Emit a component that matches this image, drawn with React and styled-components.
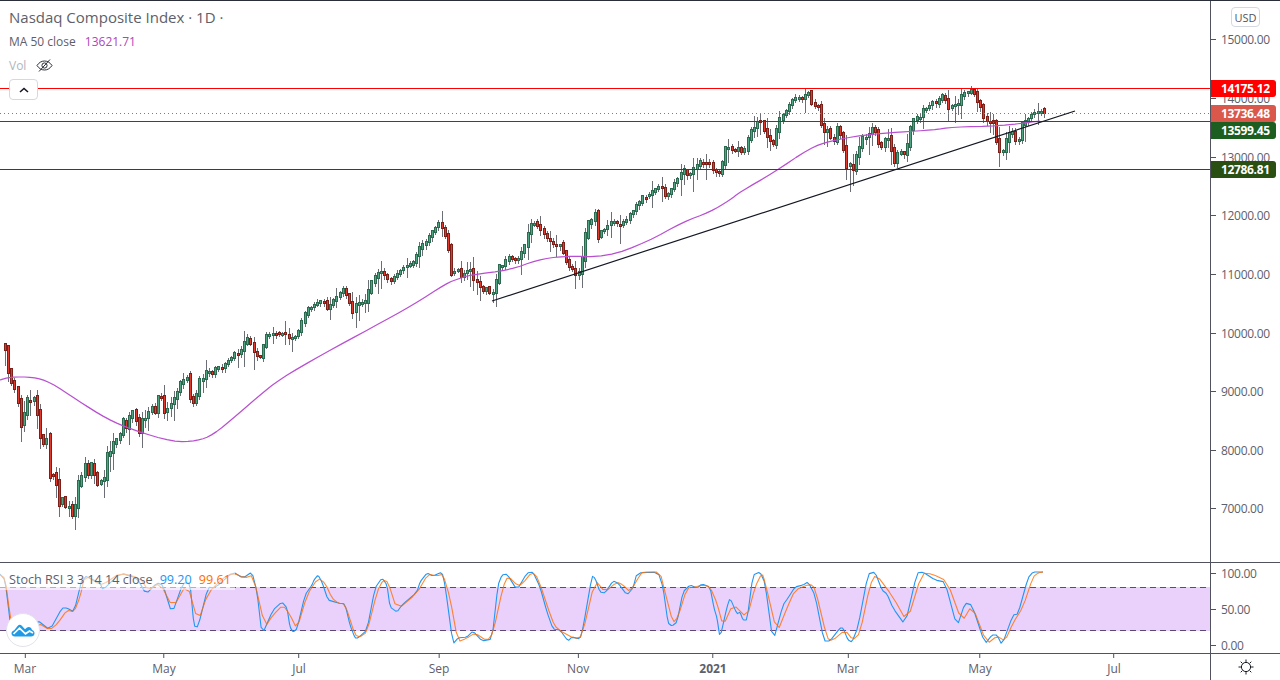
import React from "react";
import styled, { createGlobalStyle } from "styled-components";

const pairs = (s) =>
  s
    .trim()
    .split(/\s+/)
    .map((p) => p.split(",").map(Number));

const closes = pairs(`
2,344 6,353 9,379 12,383 16,392 19,412 22,433 26,395 29,408 32,392 35,405 38,420 42,453 45,430 48,452 51,497 54,458
58,513 61,488 64,513 67,500 71,515 74,517 77,485 80,485 84,462 87,478 90,464 93,467 96,487 100,480 103,485 106,456
109,456 113,444 116,440 119,438 122,420 126,428 129,419 132,411 135,417 138,435 142,420 145,419 148,413 151,407
155,413 158,397 161,397 164,413 168,408 171,403 174,399 177,392 180,384 184,380 187,378 190,399 193,403 197,393
200,378 203,379 206,372 209,372 213,375 216,367 219,368 222,368 226,363 229,360 232,357 235,353 239,355 242,347
245,342 248,338 255,356 258,357 262,357 264,337 273,333 284,333 290,340 297,335 303,318 307,309 313,306 323,300
326,310 339,294 342,288 348,299 352,313 355,305 365,302 372,281 380,271 390,282 394,277 403,268 413,263 419,249
427,240 439,222 445,237 449,253 452,282 455,268 458,270 461,278 465,272 472,270 474,283 478,282 482,293 487,287
491,297 495,286 498,268 503,266 507,257 513,260 517,261 520,255 526,243 529,227 533,222 537,226 542,232 546,238
552,244 560,244 562,251 568,267 571,267 575,275 578,275 581,265 584,243 587,224 591,222 595,213 597,239 600,232
604,230 607,226 610,222 613,221 617,224 620,225 623,223 626,221 629,215 633,211 636,205 639,203 643,196 646,197
653,191 660,185 665,197 668,194 675,182 678,178 682,172 684,170 688,177 694,168 700,162 704,163 707,163 711,163
713,173 717,172 720,174 723,159 726,146 733,151 737,150 739,148 742,154 746,147 749,133 755,127 759,118 765,135
768,137 772,147 775,138 778,123 781,117 784,114 788,107 792,101 794,99 797,96 801,100 804,96 808,92 810,102
814,107 817,104 820,120 823,135 826,127 830,137 833,144 837,128 839,130 843,148 846,167 849,163 852,173 856,157
859,148 862,138 865,138 868,135 872,128 875,132 878,143 881,148 886,137 889,140 892,155 894,163 898,153 901,152
904,155 907,146 910,130 914,118 920,117 923,110 928,107 933,102 936,104 941,97 943,95 946,102 949,110 953,103
957,108 959,100 963,93 966,92 969,94 972,87 976,101 979,103 983,117 986,120 989,124 992,114 994,133 998,148
1001,155 1004,148 1007,137 1010,132 1014,133 1017,152 1020,127 1024,123 1027,120 1030,115 1033,114 1036,112
1041,111 1044,108
`);

const maLine = pairs(`
0,380 10,377 33,377 50,382 77,400 107,419 133,430 173,442 197,441 213,435 237,415 260,395 280,379 323,354 373,327
413,305 447,283 458,279 470,275 510,270 537,260 563,256 607,257 647,242 683,222 710,212 730,200 740,192 773,173
810,148 830,141 863,135 900,132 933,130 953,127 1000,126 1040,121
`);

const stochK = pairs(`
0,574 5,580 9,612 12,640 20,645 30,632 37,620 50,630 62,608 67,608 74,612 83,575 100,583 103,590 120,573 137,578
146,594 157,583 163,585 172,614 183,583 190,583 194,626 198,627 208,587 215,588 233,572 243,578 252,572 257,592
262,635 273,610 282,602 287,608 290,627 293,632 297,629 305,595 312,585 314,580 318,575 322,582 328,600 335,602
338,603 345,604 350,625 355,638 358,638 367,630 375,588 382,578 387,585 390,607 397,612 402,605 417,592 420,582
427,573 433,576 442,572 445,585 453,644 458,638 467,637 473,631 482,641 492,639 498,585 502,575 507,574 517,590
527,573 533,572 540,587 547,612 553,629 560,630 568,641 572,637 580,639 583,628 592,576 595,578 600,592 605,593
613,581 618,583 627,595 633,588 637,573 658,572 663,587 668,623 672,626 677,622 683,592 690,585 697,588 702,584
710,587 714,608 717,618 720,638 727,607 730,598 737,614 740,612 743,620 747,620 753,575 760,572 765,583 773,642
783,605 788,598 795,587 803,585 808,582 815,595 824,641 830,641 840,628 843,628 848,640 852,642 858,627 868,574
875,572 882,590 887,594 893,608 905,625 917,573 923,572 935,580 945,582 957,627 965,603 972,605 985,644 992,635
997,635 1002,645 1013,615 1018,614 1028,578 1033,572 1043,572
`);

const stochD = pairs(`
0,575 5,578 10,615 13,628 22,642 30,636 38,623 50,630 58,623 67,610 74,612 80,597 85,575 100,585 107,582 120,573
140,578 148,590 160,583 173,608 187,583 198,622 208,593 223,578 233,573 245,578 253,575 265,627 273,615 283,605
290,615 297,629 307,595 318,578 325,583 332,598 338,603 345,604 355,635 360,637 367,632 377,592 383,580 388,582
397,610 417,593 428,574 437,576 443,574 450,598 458,642 467,638 475,633 487,641 493,633 503,587 508,576 518,586
523,583 532,572 538,578 552,620 557,629 575,639 582,636 595,580 605,592 617,582 623,585 630,592 640,575 643,572
660,572 665,592 673,623 678,617 687,588 695,587 703,585 710,587 717,603 723,626 733,604 747,618 755,587 762,573
765,582 777,633 787,608 795,590 810,584 815,588 827,638 832,641 845,630 853,640 860,633 870,585 876,574 893,597
907,622 922,573 932,574 947,581 962,622 972,605 987,644 997,636 1005,641 1013,623 1023,607 1033,577 1038,573
1043,572
`);

const interp = (points, x) => {
  if (x <= points[0][0]) return points[0][1];
  for (let i = 1; i < points.length; i++) {
    if (x <= points[i][0]) {
      const [x0, y0] = points[i - 1];
      const [x1, y1] = points[i];
      return y0 + ((y1 - y0) * (x - x0)) / (x1 - x0);
    }
  }
  return points[points.length - 1][1];
};

// rounds the corners of a polyline
const smooth = (points, rounds, r = 0.25) => {
  let list = points;
  for (let n = 0; n < rounds; n++) {
    const next = [list[0]];
    for (let i = 0; i < list.length - 1; i++) {
      const [x0, y0] = list[i];
      const [x1, y1] = list[i + 1];
      next.push([x0 + (x1 - x0) * r, y0 + (y1 - y0) * r]);
      next.push([x1 - (x1 - x0) * r, y1 - (y1 - y0) * r]);
    }
    next.push(list[list.length - 1]);
    list = next;
  }
  return list;
};

const makeCandles = () => {
  let seed = 41;
  const rnd = () => {
    seed = (seed * 16807) % 2147483647;
    return seed / 2147483647;
  };
  const step = 3.1875;
  const out = [];
  let prev = interp(closes, 0);
  for (let x = 1044 - 326 * step; x <= 1045; x += step) {
    if (x < -3) continue;
    const close = interp(closes, x);
    // the anchors sit mid-body, so the body reaches past them on both ends
    const reach = Math.abs(prev - close) * 0.18 + rnd() * 1.5;
    const up = close <= prev - (rnd() - 0.5) * 2;
    const top = Math.round(Math.min(prev, close) - reach);
    const bottom = Math.max(top + 3, Math.round(Math.max(prev, close) + reach * 0.6));
    const long = rnd() > 0.62;
    const high = top - Math.round(long ? 3 + rnd() * 8 : rnd() * 3);
    const low = bottom + Math.round(long ? 4 + rnd() * 13 : 1 + rnd() * 3);
    out.push({
      x: Math.round(x),
      top: Math.max(top, 89),
      bottom,
      high: x < 12 ? top : Math.max(high, 89),
      low,
      up,
    });
    prev = close;
  }
  // extremes that stand out in the chart
  const pin = (x, key, y) => {
    const c = out.reduce((a, b) => (Math.abs(b.x - x) < Math.abs(a.x - x) ? b : a));
    c[key] = y;
  };
  pin(74, "low", 530);
  pin(442, "high", 211);
  pin(849, "low", 192);
  pin(972, "high", 86);
  pin(492, "low", 303);
  // last two candles close the series just under the trend's top
  pin(1041, "high", 109);
  pin(1041, "low", 116);
  pin(1044, "top", 108);
  pin(1044, "bottom", 114);
  pin(1044, "high", 107);
  pin(1044, "low", 118);
  pin(1044, "up", false);
  return out;
};

const candles = makeCandles();
const toPoints = (list) => list.map((p) => p.join(",")).join(" ");

const priceTicks = [
  ["15000.00", 39],
  ["14000.00", 98],
  ["13000.00", 157],
  ["12000.00", 215],
  ["11000.00", 274],
  ["10000.00", 333],
  ["9000.00", 391],
  ["8000.00", 450],
  ["7000.00", 508],
];

const priceTags = [
  ["14175.12", 88.5, "#ff0000"],
  ["13736.48", 113.5, "#d9574b"],
  ["13599.45", 130.5, "#1b5e20"],
  ["12786.81", 169.5, "#2a4f12"],
];

const stochTicks = [
  ["100.00", 10],
  ["50.00", 46],
  ["0.00", 82],
];

const months = [
  ["Mar", 25],
  ["May", 164],
  ["Jul", 299],
  ["Sep", 439],
  ["Nov", 578],
  ["2021", 713, true],
  ["Mar", 848],
  ["May", 980],
  ["Jul", 1114],
];

const GlobalStyle = createGlobalStyle`
  html, body {
    margin: 0;
    padding: 0;
    background: #fff;
  }
  body {
    font-family: "Open Sans", "Liberation Sans", sans-serif;
    overflow: hidden;
  }
`;

const Frame = styled.div`
  width: 1280px;
  height: 680px;
  box-sizing: border-box;
  border-top: 1px solid #2a2e39;
  display: grid;
  grid-template-columns: 1211px 1fr;
  grid-template-rows: 562px 91px 1fr;
  color: #5d606b;
  overflow: hidden;
`;

const Pane = styled.div`
  position: relative;
  border-right: 1px solid #50535e;
  border-bottom: 1px solid #50535e;
`;

const Axis = styled.div`
  position: relative;
  border-bottom: 1px solid #50535e;
`;

const TimeAxis = styled.div`
  position: relative;
  border-right: 1px solid #50535e;
`;

const Corner = styled.div`
  display: flex;
  align-items: center;
  justify-content: center;
  color: #131722;
`;

const ChartSvg = styled.svg`
  display: block;
`;

const Legend = styled.div`
  position: absolute;
  left: 9px;
  top: 4px;
  display: flex;
  flex-direction: column;
  align-items: flex-start;
`;

const LegendRow = styled.div`
  height: 24px;
  display: flex;
  align-items: center;
  gap: 9px;
  font-size: ${(p) => (p.$large ? "15px" : "12px")};
  color: ${(p) => p.$color || "#5d606b"};
  white-space: pre;
`;

const LegendValue = styled.span`
  color: ${(p) => p.$color};
`;

const CollapseButton = styled.button`
  width: 29px;
  height: 21px;
  margin-top: 2px;
  padding: 0;
  display: flex;
  align-items: center;
  justify-content: center;
  background: #fff;
  border: 1px solid #d6d8e0;
  border-radius: 4px;
  color: #131722;
`;

const StochLegend = styled.div`
  position: absolute;
  left: 0;
  top: 6px;
  width: 235px;
  height: 21px;
  box-sizing: border-box;
  padding-left: 9px;
  display: flex;
  align-items: center;
  gap: 7px;
  font-size: 12.6px;
  color: #5d606b;
  background: rgba(255, 255, 255, 0.55);
  white-space: pre;
`;

const Logo = styled.div`
  position: absolute;
  left: 6px;
  top: 50px;
  width: 34px;
  height: 34px;
  box-sizing: border-box;
  border-radius: 50%;
  border: 1px solid #e0e3eb;
  background: #fff;
  display: flex;
  align-items: center;
  justify-content: center;
`;

const CurrencyButton = styled.div`
  position: absolute;
  left: 20px;
  top: 6px;
  width: 29px;
  height: 20px;
  box-sizing: border-box;
  border: 1px solid #d6d8e0;
  border-radius: 4px;
  display: flex;
  align-items: center;
  justify-content: center;
  font-size: 11px;
  color: #50535e;
  background: #fff;
`;

const AxisTick = styled.div`
  position: absolute;
  left: 0;
  top: ${(p) => p.$y}px;
  height: 16px;
  margin-top: -8px;
  display: flex;
  align-items: center;
  gap: 5px;
  font-size: 12px;
  letter-spacing: -0.3px;
  color: #5d606b;

  &::before {
    content: "";
    width: 5px;
    height: 1px;
    background: #50535e;
  }
`;

const PriceTag = styled.div`
  position: absolute;
  left: 0;
  top: ${(p) => p.$y}px;
  width: 65px;
  height: 17px;
  margin-top: -8.5px;
  box-sizing: border-box;
  padding-left: 10px;
  display: flex;
  align-items: center;
  font-size: 12px;
  font-weight: 700;
  letter-spacing: -0.35px;
  color: #fff;
  background: ${(p) => p.$bg};
  border-radius: 0 3px 3px 0;
`;

const TimeTick = styled.div`
  position: absolute;
  left: ${(p) => p.$x}px;
  top: 0;
  transform: translateX(-50%);
  display: flex;
  flex-direction: column;
  align-items: center;
  gap: 2px;
  font-size: 12px;
  font-weight: ${(p) => (p.$bold ? 700 : 400)};
  color: #5d606b;

  &::before {
    content: "";
    width: 1px;
    height: 4px;
    background: #50535e;
  }
`;

const EyeWrap = styled.span`
  display: flex;
  margin-left: 1px;
`;

const Candle = ({ c }) => (
  <g shapeRendering="crispEdges">
    <rect x={c.x} y={c.high} width="1" height={c.low - c.high} fill="#6b6e75" />
    <rect
      x={c.x - 1}
      y={c.top}
      width="3"
      height={c.bottom - c.top}
      fill={c.up ? "#2c6a50" : "#7d1f19"}
    />
    <rect
      x={c.x}
      y={c.top + 1}
      width="1"
      height={c.bottom - c.top - 2}
      fill={c.up ? "#4fa582" : "#e03a2e"}
    />
  </g>
);

const HLine = ({ y, color, dotted }) => (
  <line
    x1="0"
    x2="1210"
    y1={y}
    y2={y}
    stroke={color}
    strokeWidth="1"
    strokeDasharray={dotted ? "1 3" : undefined}
    shapeRendering="crispEdges"
  />
);

const PriceChart = () => (
  <ChartSvg width="1210" height="561" viewBox="0 1 1210 561">
    {candles.map((c, i) => (
      <Candle key={i} c={c} />
    ))}
    <polyline
      points={toPoints(smooth(maLine, 2))}
      fill="none"
      stroke="#b84fd0"
      strokeWidth="1.2"
      strokeLinejoin="round"
    />
    <HLine y={88.5} color="#ff0000" />
    <HLine y={113.5} color="#d9574b" dotted />
    <HLine y={121.5} color="#1b5e20" />
    <HLine y={169.5} color="#2a4f12" />
    <line x1="492" y1="301" x2="1075" y2="111" stroke="#131722" strokeWidth="1.2" />
  </ChartSvg>
);

const StochChart = () => (
  <ChartSvg width="1210" height="90" viewBox="0 563 1210 90">
    <rect x="0" y="587" width="1210" height="44" fill="#e9d1fc" />
    <line x1="0" x2="1210" y1="587.5" y2="587.5" stroke="#5c4a72" strokeDasharray="6 4" shapeRendering="crispEdges" />
    <line x1="0" x2="1210" y1="630.5" y2="630.5" stroke="#5c4a72" strokeDasharray="6 4" shapeRendering="crispEdges" />
    <polyline points={toPoints(smooth(stochK, 1, 0.18))} fill="none" stroke="#2196f3" strokeWidth="1.1" strokeLinejoin="round" />
    <polyline points={toPoints(smooth(stochD, 1, 0.22))} fill="none" stroke="#ff6d00" strokeOpacity="0.8" strokeWidth="1.1" strokeLinejoin="round" />
  </ChartSvg>
);

const EyeOffIcon = () => (
  <svg width="17" height="15" viewBox="0 0 17 15" fill="none" stroke="#2a2e39" strokeWidth="1">
    <path d="M1 7.5C3 4.5 5.5 3 8.5 3s5.5 1.5 7.5 4.5c-2 3-4.5 4.5-7.5 4.5S3 10.5 1 7.5Z" />
    <circle cx="8.5" cy="7.5" r="2.6" />
    <path d="M3 13.5 14 1.5" />
  </svg>
);

const ChevronUpIcon = () => (
  <svg width="10" height="6" viewBox="0 0 10 6" fill="none" stroke="currentColor" strokeWidth="1.6">
    <path d="M1 5 5 1.5 9 5" />
  </svg>
);

const CloudLogo = () => (
  <svg width="24" height="14" viewBox="0 0 24 14" fill="none">
    <path
      d="M4 13.5C1.5 13.5 0.5 11.8 0.5 10.3 0.5 8.6 1.8 7.6 3 7.4L6.6 3C8 1.4 9.5 1.4 10.8 2.8L14 6.2 16 4.6C18 3.2 20.5 4.6 21 7 22.8 7.6 23.6 9 23.5 10.4 23.4 12.2 22 13.5 20 13.5Z"
      fill="#1f9ae6"
    />
    <path d="M2.5 11 8.5 5.2 14.5 10.8 18.5 8 22 10" stroke="#fff" strokeWidth="1.7" />
  </svg>
);

const SunIcon = () => (
  <svg width="16" height="16" viewBox="0 0 16 16" fill="none" stroke="#131722" strokeWidth="1">
    <circle cx="8" cy="8" r="4.6" />
    <path d="M8 0.5v2.4M8 13.1v2.4M0.5 8h2.4M13.1 8h2.4M2.7 2.7l1.7 1.7M11.6 11.6l1.7 1.7M2.7 13.3l1.7-1.7M11.6 4.4l1.7-1.7" />
  </svg>
);

const App = () => (
  <>
    <GlobalStyle />
    <Frame>
      <Pane>
        <PriceChart />
        <Legend>
          <LegendRow $large>Nasdaq Composite Index · 1D ·</LegendRow>
          <LegendRow>
            MA 50 close
            <LegendValue $color="#ab47bc">13621.71</LegendValue>
          </LegendRow>
          <LegendRow $color="#b2b5be">
            Vol
            <EyeWrap>
              <EyeOffIcon />
            </EyeWrap>
          </LegendRow>
          <CollapseButton aria-label="Collapse">
            <ChevronUpIcon />
          </CollapseButton>
        </Legend>
      </Pane>
      <Axis>
        <CurrencyButton>USD</CurrencyButton>
        {priceTicks.map(([label, y]) => (
          <AxisTick key={label} $y={y - 1}>
            {label}
          </AxisTick>
        ))}
        {priceTags.map(([label, y, bg]) => (
          <PriceTag key={label} $y={y - 1} $bg={bg}>
            {label}
          </PriceTag>
        ))}
      </Axis>
      <Pane>
        <StochChart />
        <StochLegend>
          Stoch RSI 3 3 14 14 close
          <LegendValue $color="#2196f3">99.20</LegendValue>
          <LegendValue $color="#ff6d00">99.61</LegendValue>
        </StochLegend>
        <Logo>
          <CloudLogo />
        </Logo>
      </Pane>
      <Axis>
        {stochTicks.map(([label, y]) => (
          <AxisTick key={label} $y={y}>
            {label}
          </AxisTick>
        ))}
      </Axis>
      <TimeAxis>
        {months.map(([label, x, bold]) => (
          <TimeTick key={label + x} $x={x} $bold={bold}>
            {label}
          </TimeTick>
        ))}
      </TimeAxis>
      <Corner>
        <SunIcon />
      </Corner>
    </Frame>
  </>
);

export default App;
